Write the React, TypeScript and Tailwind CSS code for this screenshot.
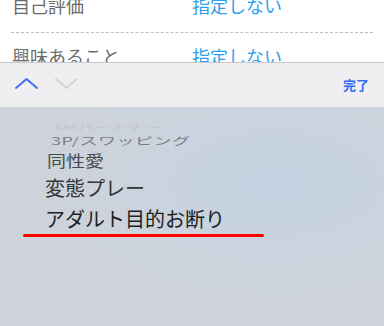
const jp = { fontFamily: '"Noto Sans CJK JP", "Noto Sans", sans-serif' };

const rows = [
  { label: "自己評価", value: "指定しない" },
  { label: "興味あること", value: "指定しない" },
];

function Chevron({ up, className }: { up?: boolean; className: string }) {
  return (
    <svg width="23" height="11" viewBox="0 0 23 11" className={className} fill="none">
      <polyline
        points={up ? "1,10 11.5,1 22,10" : "1,1 11.5,10 22,1"}
        stroke="currentColor"
        strokeWidth="1.8"
        strokeLinecap="round"
        strokeLinejoin="round"
      />
    </svg>
  );
}

export default function App() {
  return (
    <div className="w-[384px] h-[326px] overflow-hidden flex flex-col bg-white" style={jp}>
      {/* form rows, scrolled partly out of view */}
      <div className="h-[62px] overflow-hidden shrink-0">
        <div className="-mt-[8px] px-[11px]">
          <div className="flex items-center h-[27px] mb-[13px] text-[18px] leading-[27px]">
            <span className="w-[181px] pl-[1px] text-[#6b6b6b]">{rows[0].label}</span>
            <span className="text-[#2d9ff0]">{rows[0].value}</span>
          </div>
          <div className="border-b border-dashed border-[#bdbdbd]" />
          <div className="flex items-center h-[27px] mt-[10px] text-[18px] leading-[27px]">
            <span className="w-[181px] pl-[1px] text-[#6b6b6b]">{rows[1].label}</span>
            <span className="text-[#2d9ff0]">{rows[1].value}</span>
          </div>
        </div>
      </div>

      {/* keyboard toolbar */}
      <div className="h-[45px] shrink-0 border-t border-[#c8c8cc] bg-[#efeff2] flex items-center pl-[15px] pr-[15px]">
        <Chevron up className="text-[#3a6cf6] -mt-[3px]" />
        <Chevron className="text-[#d2d2d7] ml-[17px] -mt-[3px]" />
        <span className="ml-auto text-[13px] font-bold text-[#2f6cf2] -mt-[1px]">完了</span>
      </div>

      {/* picker wheel */}
      <div className="flex-1 bg-[radial-gradient(ellipse_at_72%_35%,#c3d3e2_0%,#cbd3de_35%,#cfd3db_70%)] pt-[15px]">
        <div className="pl-[53px] h-[10px] leading-[10px] text-[17px] text-[#c0c3ca] scale-y-[0.4] origin-center whitespace-nowrap">
          SMパートナー
        </div>
        <div className="pl-[51px] h-[16px] leading-[16px] text-[18px] tracking-[0.5px] text-[#7a7c80] scale-y-[0.58] origin-center whitespace-nowrap">
          3P/スワッピング
        </div>
        <div className="pl-[47px] h-[24px] leading-[24px] text-[19px] text-[#48494c] scale-y-[0.82] origin-center">
          同性愛
        </div>
        <div className="pl-[45px] h-[32px] leading-[32px] text-[20px] text-[#333437]">
          変態プレー
        </div>
        <div className="pl-[45px] h-[30px] leading-[30px] text-[20px] text-[#1e1f21]">
          アダルト目的お断り
        </div>
        <div className="ml-[23px] w-[241px] h-[3px] bg-[#ff0000] rounded-full" />
      </div>
    </div>
  );
}
